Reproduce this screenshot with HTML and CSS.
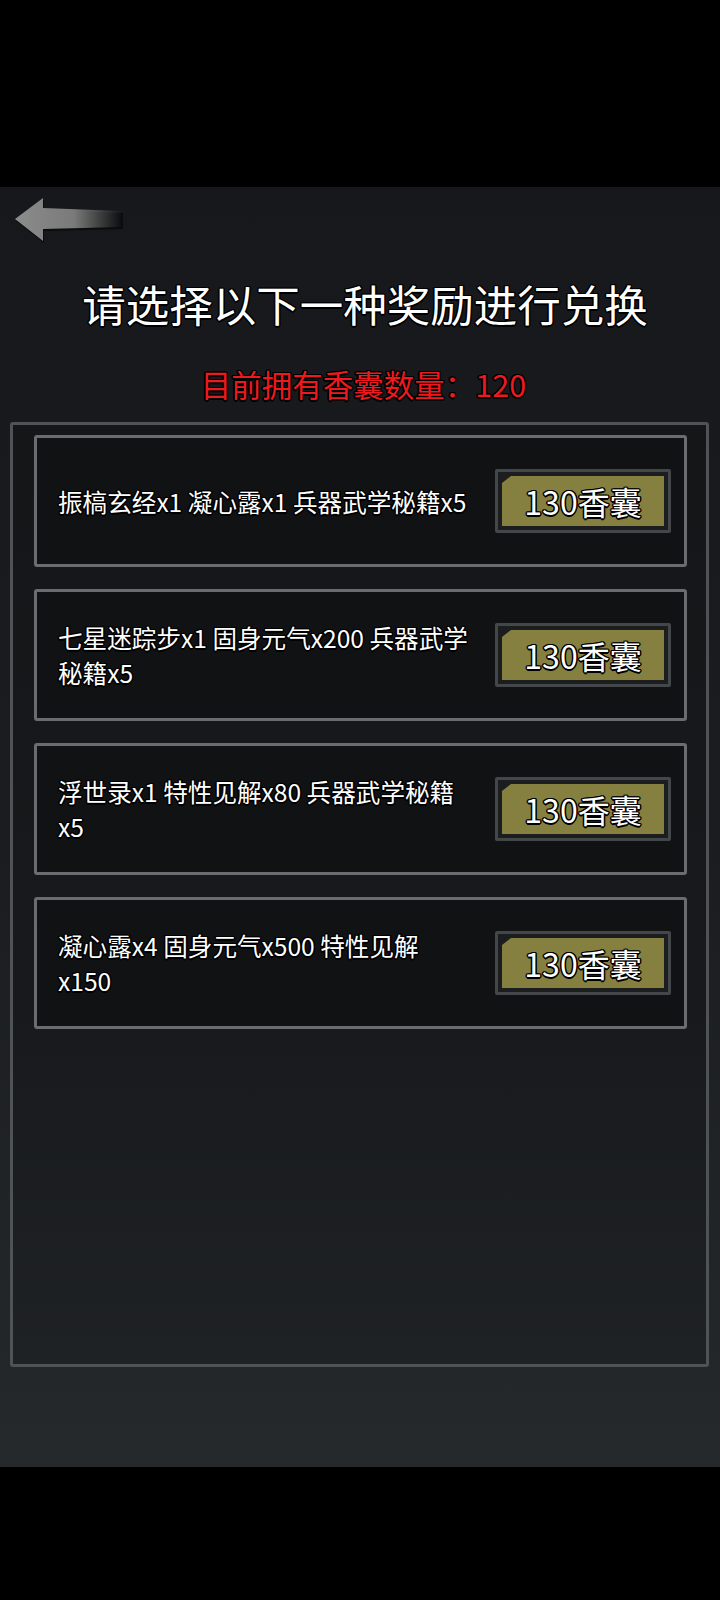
FILE: index.html
```html
<!DOCTYPE html>
<html lang="zh-CN">
  <head>
    <meta charset="UTF-8" />
    <meta name="viewport" content="width=device-width, initial-scale=1.0" />
    <title>香囊兑换</title>
    <link rel="stylesheet" href="styles.css">
  </head>
  <body>
    <div class="status-bar"></div>
    <main class="screen">
      <div class="back">
        <svg width="112" height="48" viewBox="0 0 112 48">
          <defs>
            <linearGradient id="shaft" x1="0" y1="0" x2="1" y2="0">
              <stop offset="0" stop-color="#8c8c8c" />
              <stop offset="0.55" stop-color="#7a7a7a" />
              <stop offset="1" stop-color="#7a7a7a" stop-opacity="0" />
            </linearGradient>
          </defs>
          <polygon points="3,23 31,2 31,12 110,15 110,31 31,33 31,45" fill="#0b0c0d" transform="translate(1,2)" />
          <polygon points="3,23 31,2 31,12 110,15 110,31 31,33 31,45" fill="url(#shaft)" />
        </svg>
      </div>

      <h1 class="title">请选择以下一种奖励进行兑换</h1>
      <p class="owned">目前拥有香囊数量：120</p>

      <section class="panel">
        <div class="card">
          <p class="reward">振槁玄经x1 凝心露x1 兵器武学秘籍x5</p>
          <button class="buy"><span>130香囊</span></button>
        </div>
        <div class="card">
          <p class="reward">七星迷踪步x1 固身元气x200 兵器武学<br />秘籍x5</p>
          <button class="buy"><span>130香囊</span></button>
        </div>
        <div class="card">
          <p class="reward">浮世录x1 特性见解x80 兵器武学秘籍<br />x5</p>
          <button class="buy"><span>130香囊</span></button>
        </div>
        <div class="card">
          <p class="reward">凝心露x4 固身元气x500 特性见解<br />x150</p>
          <button class="buy"><span>130香囊</span></button>
        </div>
      </section>
    </main>
    <div class="nav-bar"></div>
  </body>
</html>
```

FILE: styles.css
```css
:root {
  --outline: 1.5px 0 0 #000, -1.5px 0 0 #000, 0 1.5px 0 #000, 0 -1.5px 0 #000,
    1px 1px 0 #000, -1px -1px 0 #000, 1px -1px 0 #000, -1px 1px 0 #000;
}
* {
  box-sizing: border-box;
}
body {
  margin: 0;
  width: 720px;
  background-color: #000;
  font-family: "Noto Sans CJK SC", "Noto Sans", sans-serif;
  color: #fff;
}

.status-bar {
  height: 187px;
  background-color: #000;
}

.nav-bar {
  height: 133px;
  background-color: #000;
}

.screen {
  height: 1280px;
  padding-top: 9px;
  background: linear-gradient(180deg, #16181b 0%, #1a1c1f 50%, #25292c 100%);
  display: flex;
  flex-direction: column;
}

.back {
  margin-left: 12px;
  height: 48px;
}

.back svg {
  display: block;
}

.title {
  margin: 34px 0 0;
  padding-left: 10px;
  font-size: 43.5px;
  font-weight: 400;
  line-height: 52px;
  text-align: center;
  text-shadow: var(--outline);
}

.owned {
  margin: 36px 0 0;
  padding-left: 7px;
  font-size: 30.5px;
  line-height: 36px;
  text-align: center;
  color: #ec1a1f;
  text-shadow: var(--outline);
}

.panel {
  margin: 20px 11px 0 10px;
  height: 945px;
  border: 3px solid #4f5356;
  border-radius: 3px;
  background: linear-gradient(180deg, #141618 0%, #17191c 60%, #1f2225 100%);
  padding: 10px 19px 0 21px;
  display: flex;
  flex-direction: column;
  gap: 22px;
}

.card {
  height: 132px;
  border: 3px solid #6a6d70;
  border-radius: 3px;
  background-color: #111214;
  display: flex;
  align-items: center;
  justify-content: space-between;
  padding: 0 13px 0 21px;
}

.reward {
  margin: 0;
  font-size: 24.6px;
  line-height: 35px;
  text-shadow: var(--outline);
}

.buy {
  width: 176px;
  height: 64px;
  padding: 4px;
  border: 3px solid #44474a;
  border-radius: 2px;
  background-color: #1c1d1f;
  cursor: pointer;
}

.buy span {
  display: flex;
  align-items: center;
  justify-content: center;
  height: 100%;
  background-color: #85803f;
  clip-path: polygon(9px 0, 100% 0, 100% 100%, 0 100%, 0 7px);
  font-family: "Noto Sans CJK SC", "Noto Sans", sans-serif;
  font-size: 32px;
  color: #fff;
  text-shadow: var(--outline);
}
```
